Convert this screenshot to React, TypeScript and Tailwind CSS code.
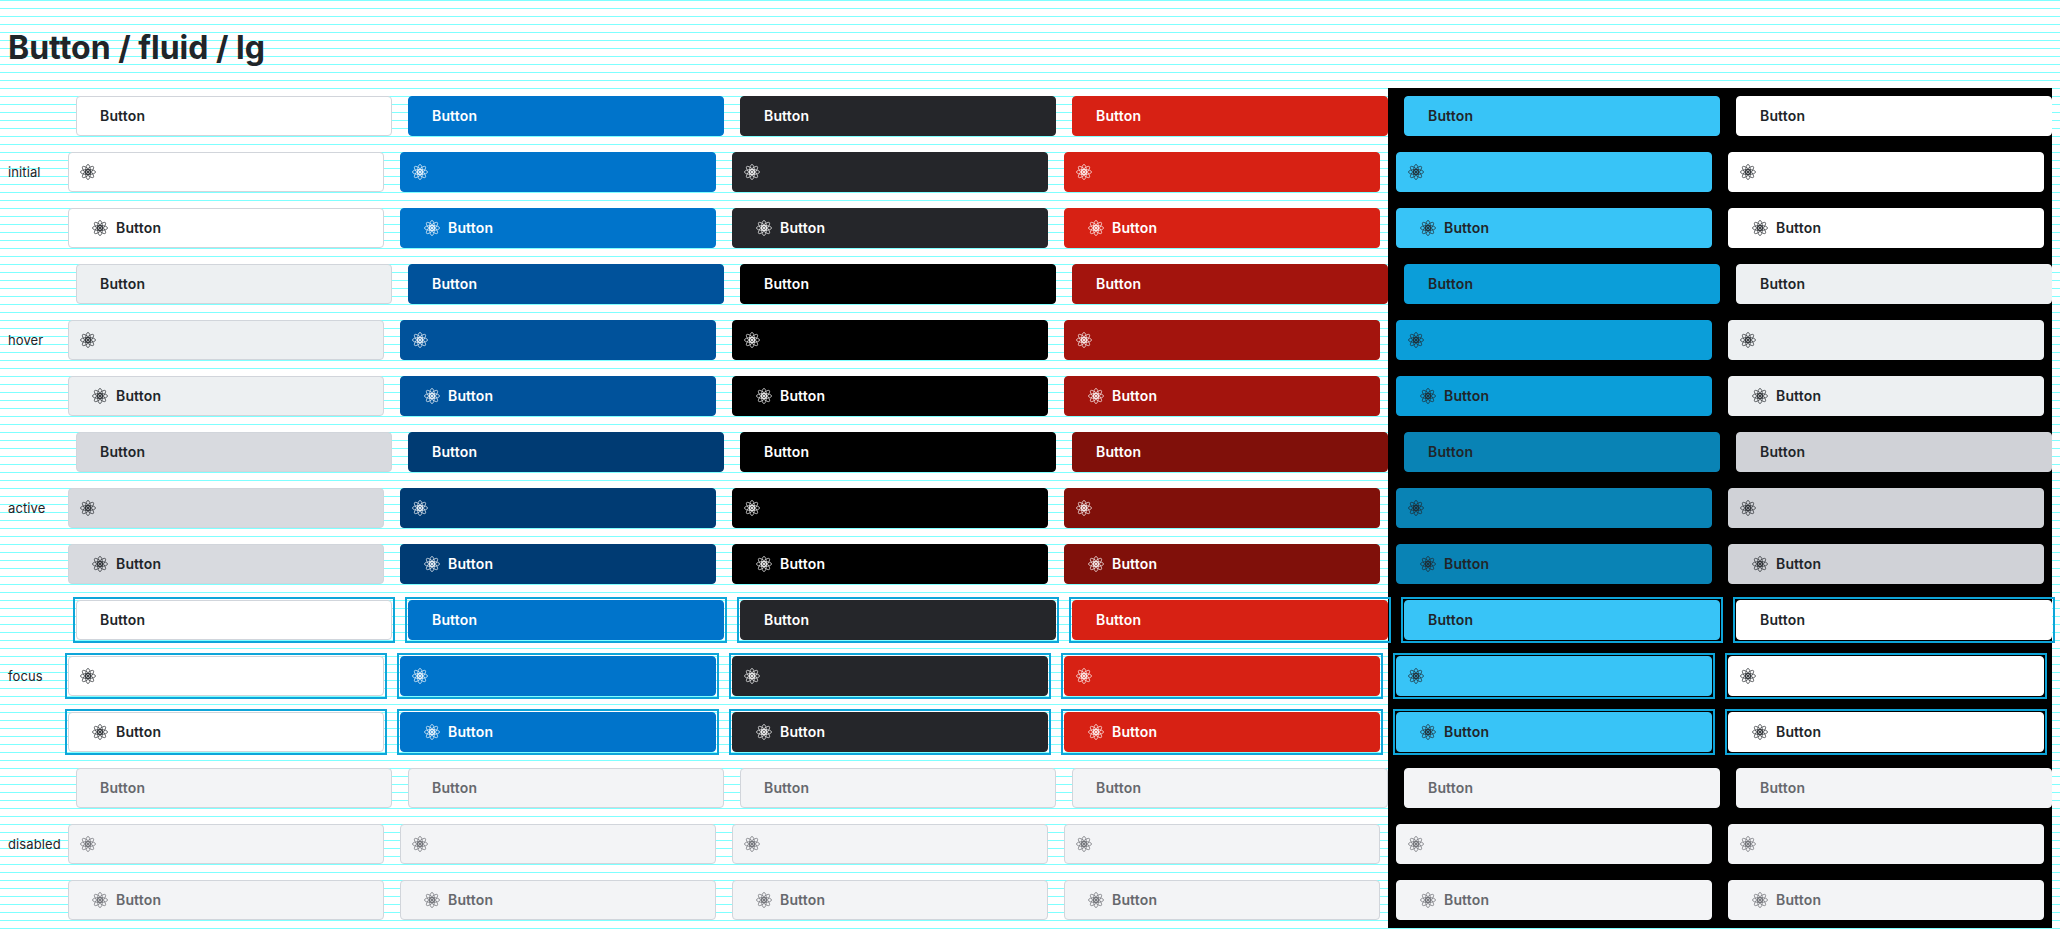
const font = "font-['Inter',sans-serif]";

type Look = { base: string; text: string };

const disabledLight: Look = { base: 'bg-[#f3f4f6] border-[#d1d5db]', text: 'text-[#66686d]' };
const disabledDark: Look = { base: 'bg-[#f3f4f6] border-[#f3f4f6]', text: 'text-[#66686d]' };

const looks: Record<string, Look[]> = {
  neutral: [
    { base: 'bg-white border-[#d1d5db]', text: 'text-[#212529]' },
    { base: 'bg-[#edf0f2] border-[#d1d5db]', text: 'text-[#212529]' },
    { base: 'bg-[#d8dadf] border-[#d1d5db]', text: 'text-[#212529]' },
    { base: 'bg-white border-[#d1d5db]', text: 'text-[#212529]' },
    disabledLight,
  ],
  blue: [
    { base: 'bg-[#0074cb] border-[#0074cb]', text: 'text-white' },
    { base: 'bg-[#00529b] border-[#00529b]', text: 'text-white' },
    { base: 'bg-[#003b73] border-[#003b73]', text: 'text-white' },
    { base: 'bg-[#0074cb] border-[#0074cb]', text: 'text-white' },
    disabledLight,
  ],
  dark: [
    { base: 'bg-[#25262a] border-[#25262a]', text: 'text-white' },
    { base: 'bg-black border-black', text: 'text-white' },
    { base: 'bg-black border-black', text: 'text-white' },
    { base: 'bg-[#25262a] border-[#25262a]', text: 'text-white' },
    disabledLight,
  ],
  red: [
    { base: 'bg-[#d72114] border-[#d72114]', text: 'text-white' },
    { base: 'bg-[#a3140d] border-[#a3140d]', text: 'text-white' },
    { base: 'bg-[#80100a] border-[#80100a]', text: 'text-white' },
    { base: 'bg-[#d72114] border-[#d72114]', text: 'text-white' },
    disabledLight,
  ],
  sky: [
    { base: 'bg-[#38c4f7] border-[#38c4f7]', text: 'text-[#212529]' },
    { base: 'bg-[#0b9ed9] border-[#0b9ed9]', text: 'text-[#212529]' },
    { base: 'bg-[#0983b5] border-[#0983b5]', text: 'text-[#212529]' },
    { base: 'bg-[#38c4f7] border-[#38c4f7]', text: 'text-[#212529]' },
    disabledDark,
  ],
  white: [
    { base: 'bg-white border-white', text: 'text-[#212529]' },
    { base: 'bg-[#edf0f2] border-[#edf0f2]', text: 'text-[#212529]' },
    { base: 'bg-[#d0d2d7] border-[#d0d2d7]', text: 'text-[#212529]' },
    { base: 'bg-white border-white', text: 'text-[#212529]' },
    disabledDark,
  ],
};

function Atom() {
  return (
    <svg width="16" height="16" viewBox="0 0 16 16" fill="none" stroke="currentColor" strokeWidth="0.65" className="shrink-0">
      <ellipse cx="8" cy="8" rx="2.5" ry="7.6" />
      <ellipse cx="8" cy="8" rx="2.5" ry="7.6" transform="rotate(45 8 8)" />
      <ellipse cx="8" cy="8" rx="2.5" ry="7.6" transform="rotate(90 8 8)" />
      <ellipse cx="8" cy="8" rx="2.5" ry="7.6" transform="rotate(135 8 8)" />
      <circle cx="8" cy="8" r="0.9" fill="currentColor" />
      <circle cx="8" cy="8" r="2.3" strokeWidth="0.9" />
    </svg>
  );
}

function Btn({ look, kind, focus }: { look: Look; kind: 'text' | 'icon' | 'both'; focus: boolean }) {
  const pad = kind === 'text' ? 'ml-2 -mr-2 pl-[23px]' : kind === 'icon' ? 'pl-[11px]' : 'pl-[23px]';
  return (
    <div className={`relative flex h-10 w-[316px] shrink-0 items-center gap-2 rounded border text-sm font-semibold tracking-[0.15px] ${pad} ${look.base} ${look.text}`}>
      {kind !== 'text' && <Atom />}
      {kind !== 'icon' && <span>Button</span>}
      {focus && <span className="absolute -inset-[4px] border-2 border-[#0ea5d9]" />}
    </div>
  );
}

function Column({ name }: { name: string }) {
  return (
    <div className="flex flex-col gap-4">
      {looks[name].map((look, state) => (
        <div key={state} className="flex flex-col gap-4">
          <Btn look={look} kind="text" focus={state === 3} />
          <Btn look={look} kind="icon" focus={state === 3} />
          <Btn look={look} kind="both" focus={state === 3} />
        </div>
      ))}
    </div>
  );
}

export default function App() {
  return (
    <div className={`h-[936px] w-full overflow-hidden bg-white bg-[linear-gradient(#7fffff_1px,transparent_1px)] bg-[size:100%_8px] ${font}`}>
      <h1 className="flex h-[88px] items-start pl-2 pt-[28px] text-[32px] font-bold leading-[40px] text-[#212529]">Button / fluid / lg</h1>
      <div className="flex items-start pl-2">
        <div className="mt-[9px] flex w-[60px] shrink-0 flex-col gap-4 text-[13px] tracking-[0.1px] text-[#212529]">
          {['initial', 'hover', 'active', 'focus', 'disabled'].map((s) => (
            <div key={s} className="flex h-[152px] items-center">{s}</div>
          ))}
        </div>
        <div className="mt-2 flex shrink-0 gap-4">
          <Column name="neutral" />
          <Column name="blue" />
          <Column name="dark" />
          <Column name="red" />
        </div>
        <div className="ml-2 flex shrink-0 gap-4 bg-black px-2 py-2">
          <Column name="sky" />
          <Column name="white" />
        </div>
      </div>
    </div>
  );
}
